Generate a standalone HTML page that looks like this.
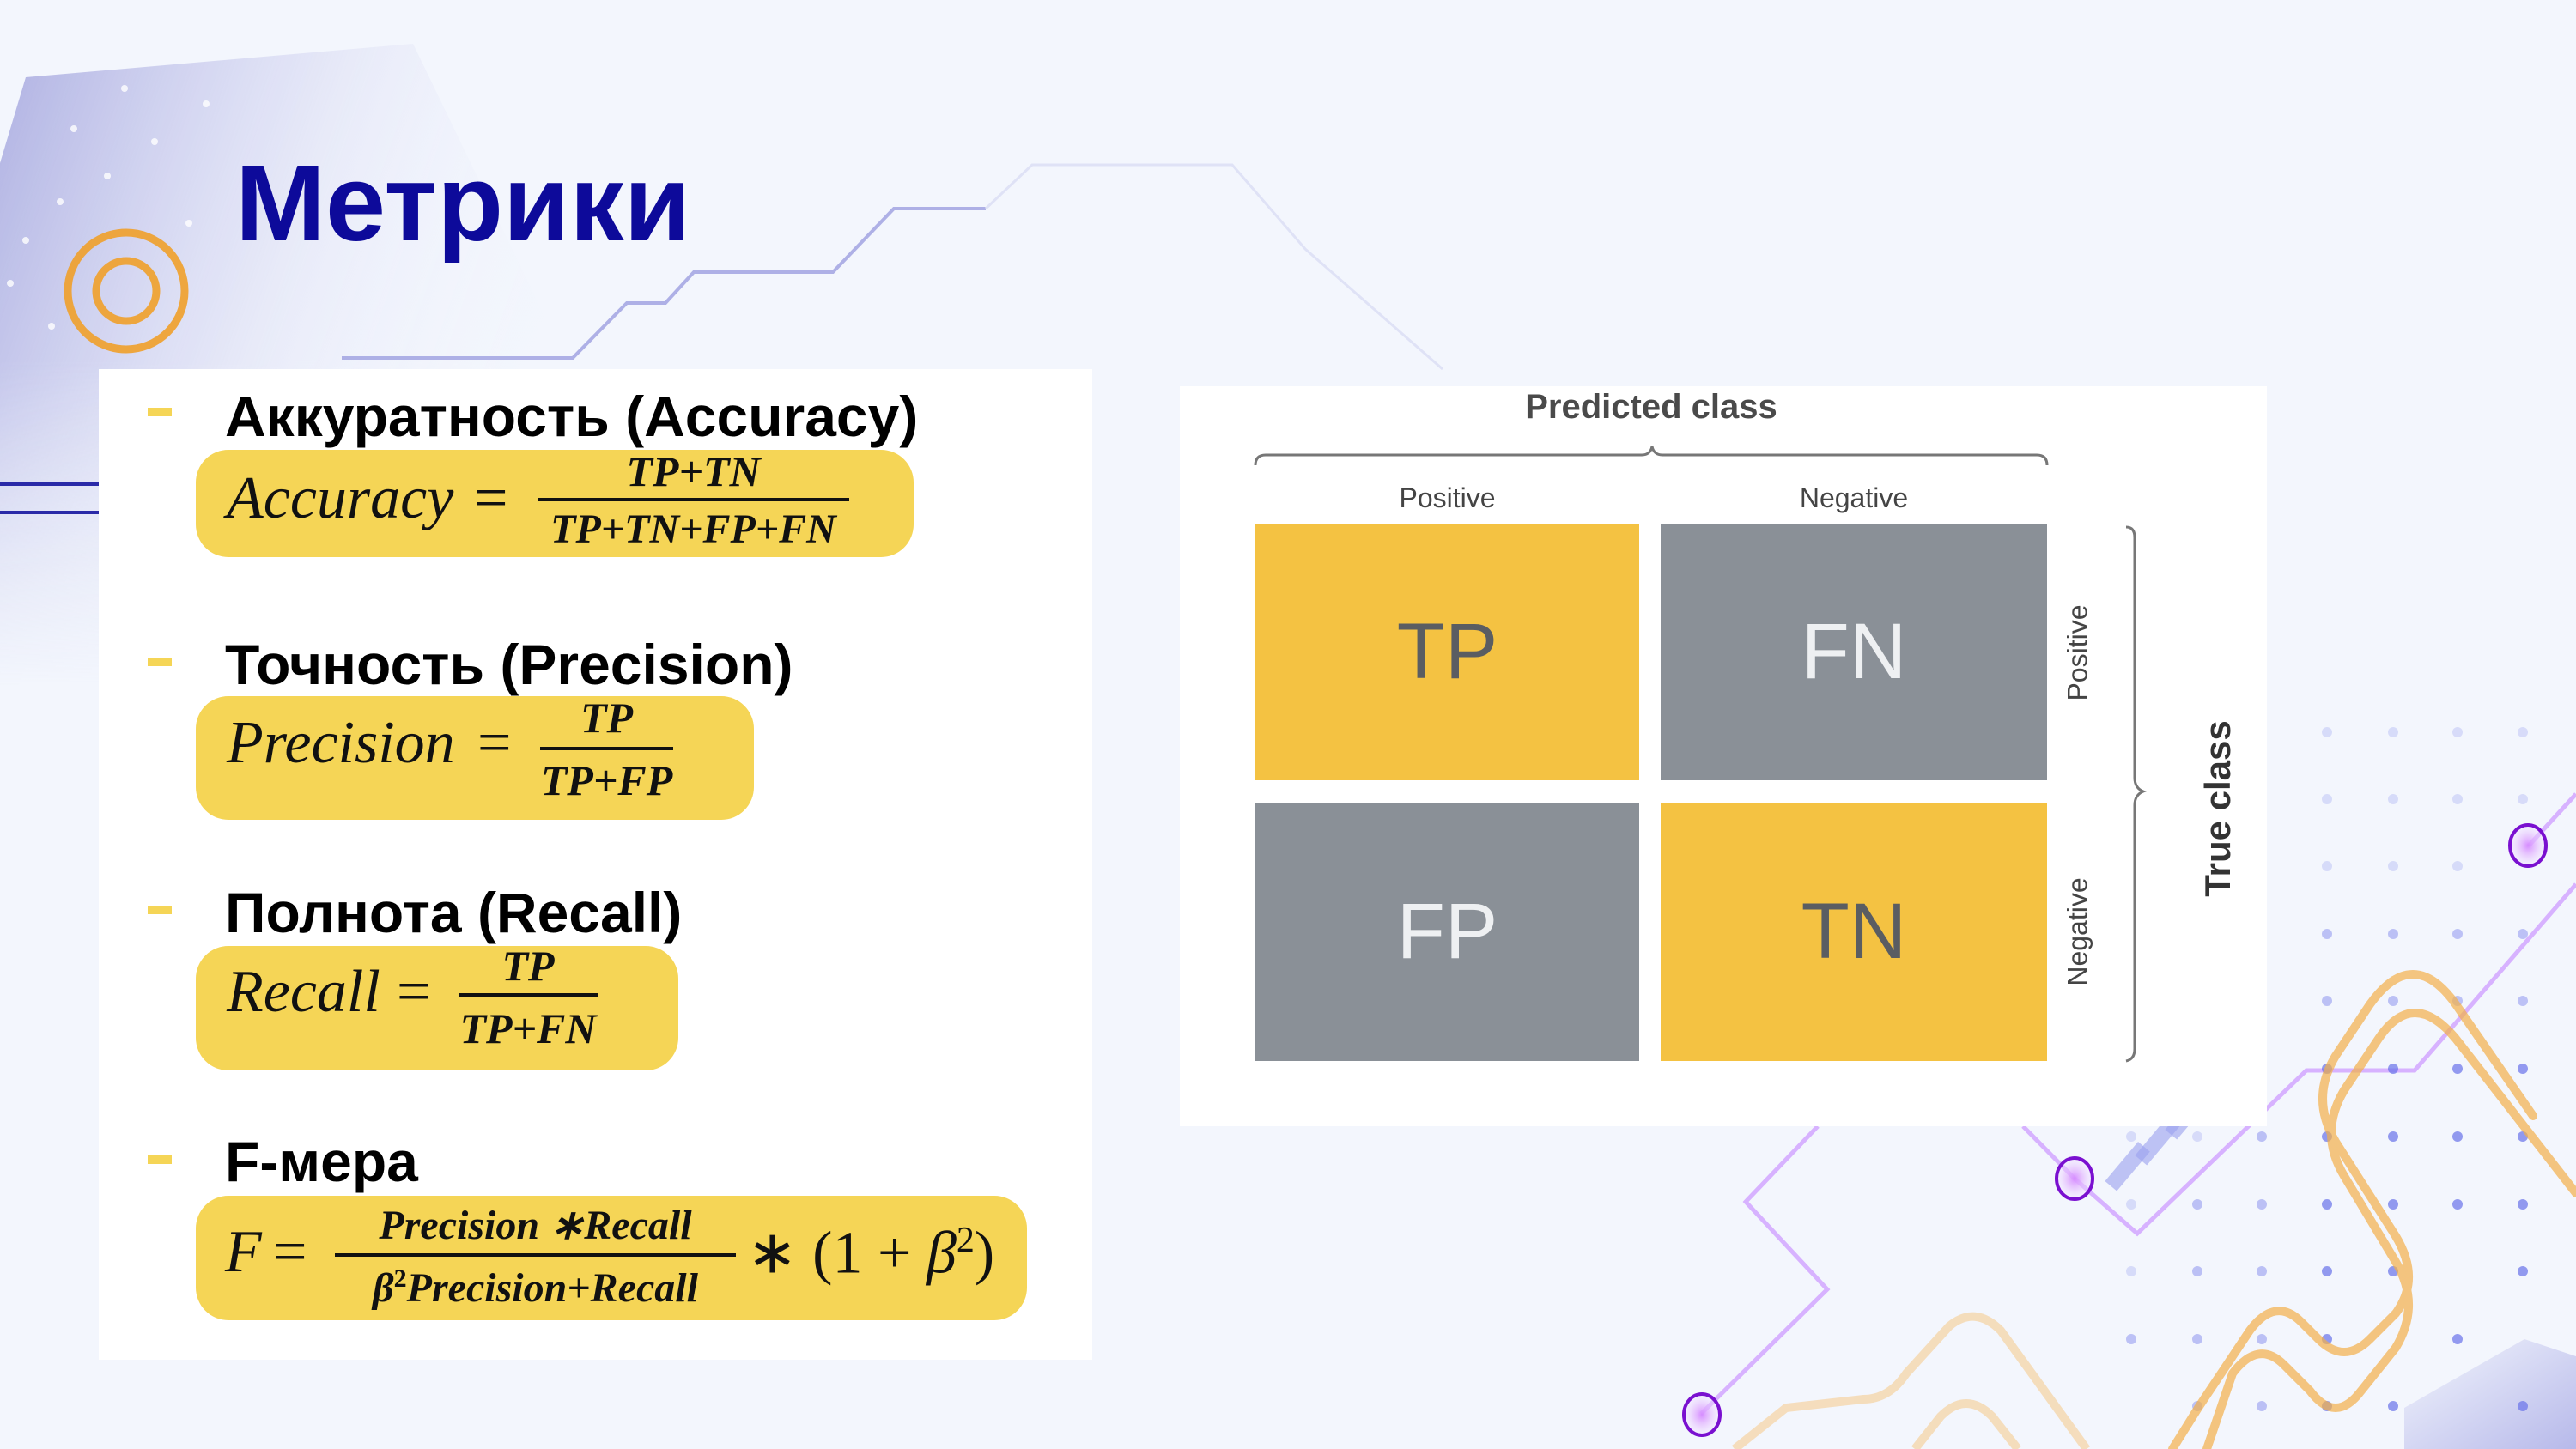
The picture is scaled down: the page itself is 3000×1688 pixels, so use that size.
<!DOCTYPE html>
<html><head><meta charset="utf-8"><style>
*{margin:0;padding:0;box-sizing:border-box}
body{width:3000px;height:1688px;background:#f3f6fd;position:relative;overflow:hidden;font-family:"Liberation Sans",sans-serif}
.a{position:absolute;white-space:nowrap}
.h{font-weight:bold;font-size:66px;color:#000;line-height:66px}
.dash{position:absolute;left:172px;width:28px;height:10px;background:#f5d556}
.box{position:absolute;background:#f5d556;border-radius:38px}
.m{font-family:"Liberation Serif",serif;font-style:italic;color:#111;line-height:1}
.ln{position:absolute;height:4px;background:#111}
.cell{position:absolute;display:flex;align-items:center;justify-content:center;font-size:92px;font-family:"Liberation Sans",sans-serif;font-weight:normal}
</style></head><body>
<svg class="a" style="left:0;top:0" width="3000" height="1688">
<defs>
<linearGradient id="g1" x1="0" y1="0" x2="1" y2="0.4"><stop offset="0" stop-color="#aeb0e2"/><stop offset="0.6" stop-color="#e4e6f7" stop-opacity="0.6"/><stop offset="1" stop-color="#f3f6fd" stop-opacity="0"/></linearGradient>
<linearGradient id="vf" x1="0" y1="0" x2="0" y2="1"><stop offset="0.5" stop-color="#fff"/><stop offset="1" stop-color="#000"/></linearGradient>
<mask id="mk"><rect x="0" y="40" width="700" height="760" fill="url(#vf)"/></mask>
<linearGradient id="g2" x1="0" y1="0" x2="1" y2="1"><stop offset="0" stop-color="#f3f6fd"/><stop offset="1" stop-color="#b7b9ea"/></linearGradient>
<radialGradient id="pc"><stop offset="0" stop-color="#d68cff"/><stop offset="1" stop-color="#f3e6ff" stop-opacity="0.3"/></radialGradient>
</defs>
<polygon points="0,190 30,90 481,51 640,380 430,800 0,800" fill="url(#g1)" mask="url(#mk)"/>
<polygon points="2800,1640 2940,1560 3000,1580 3000,1688 2800,1688" fill="url(#g2)"/>
<g fill="#fff" opacity="0.8"><circle cx="86" cy="150" r="4"/><circle cx="145" cy="103" r="4"/><circle cx="240" cy="121" r="4"/><circle cx="70" cy="235" r="4"/><circle cx="180" cy="165" r="4"/><circle cx="30" cy="280" r="4"/><circle cx="125" cy="205" r="4"/><circle cx="60" cy="380" r="4"/><circle cx="12" cy="330" r="4"/><circle cx="220" cy="260" r="4"/></g>
<polyline points="398,417 667,417 730,353 775,353 808,317 970,317 1041,243 1148,243" fill="none" stroke="#9c9fe0" stroke-width="4" opacity="0.8"/>
<polyline points="1148,243 1202,192 1435,192 1520,290 1680,430" fill="none" stroke="#dfe2f6" stroke-width="3"/>
<line x1="0" y1="564" x2="115" y2="564" stroke="#2a2aa8" stroke-width="4"/>
<line x1="0" y1="597" x2="115" y2="597" stroke="#2a2aa8" stroke-width="4"/>
<circle cx="147" cy="339" r="68" fill="none" stroke="#f0a02a" stroke-width="9" opacity="0.9"/>
<circle cx="147" cy="339" r="35" fill="none" stroke="#f0a02a" stroke-width="9" opacity="0.9"/>
<g fill="none" stroke="#d7b2ff" stroke-width="5">
<polyline points="1981,1647 2128,1502 2033,1400 2117,1312"/>
<polyline points="2356,1312 2416,1373 2489,1437 2686,1247 2812,1247 3000,1030"/>
<line x1="2945" y1="985" x2="3000" y2="925"/>
</g>
<g fill="#9aa0ee">
<rect x="2490" y="1330" width="18" height="60" transform="rotate(40 2490 1330)" opacity="0.6"/>
<rect x="2525" y="1300" width="18" height="60" transform="rotate(40 2525 1300)" opacity="0.6"/>
<rect x="2560" y="1270" width="18" height="60" transform="rotate(40 2560 1270)" opacity="0.6"/>
<rect x="2610" y="1210" width="18" height="60" transform="rotate(40 2610 1210)" opacity="0.6"/>
</g>
<g fill="#6872ea">
<g opacity="0.2"><circle cx="2710" cy="853" r="6"/><circle cx="2787" cy="853" r="6"/><circle cx="2862" cy="853" r="6"/><circle cx="2938" cy="853" r="6"/>
<circle cx="2710" cy="931" r="6"/><circle cx="2787" cy="931" r="6"/><circle cx="2862" cy="931" r="6"/><circle cx="2938" cy="931" r="6"/>
<circle cx="2710" cy="1009" r="6"/><circle cx="2787" cy="1009" r="6"/><circle cx="2862" cy="1009" r="6"/>
<circle cx="2482" cy="1324" r="6"/><circle cx="2482" cy="1403" r="6"/><circle cx="2482" cy="1481" r="6"/><circle cx="2559" cy="1324" r="6"/></g>
<g opacity="0.4"><circle cx="2710" cy="1088" r="6"/><circle cx="2787" cy="1088" r="6"/><circle cx="2862" cy="1088" r="6"/><circle cx="2938" cy="1088" r="6"/>
<circle cx="2710" cy="1166" r="6"/><circle cx="2787" cy="1166" r="6"/><circle cx="2862" cy="1166" r="6"/><circle cx="2938" cy="1166" r="6"/>
<circle cx="2634" cy="1324" r="6"/><circle cx="2559" cy="1403" r="6"/><circle cx="2634" cy="1403" r="6"/><circle cx="2634" cy="1481" r="6"/><circle cx="2559" cy="1481" r="6"/><circle cx="2482" cy="1560" r="6"/><circle cx="2559" cy="1560" r="6"/><circle cx="2634" cy="1560" r="6"/><circle cx="2559" cy="1638" r="6"/><circle cx="2634" cy="1638" r="6"/></g>
<g opacity="0.7"><circle cx="2710" cy="1245" r="6"/><circle cx="2787" cy="1245" r="6"/><circle cx="2862" cy="1245" r="6"/><circle cx="2938" cy="1245" r="6"/>
<circle cx="2710" cy="1324" r="6"/><circle cx="2787" cy="1324" r="6"/><circle cx="2862" cy="1324" r="6"/><circle cx="2938" cy="1324" r="6"/>
<circle cx="2710" cy="1403" r="6"/><circle cx="2787" cy="1403" r="6"/><circle cx="2862" cy="1403" r="6"/><circle cx="2938" cy="1403" r="6"/>
<circle cx="2710" cy="1481" r="6"/><circle cx="2787" cy="1481" r="6"/><circle cx="2938" cy="1481" r="6"/>
<circle cx="2710" cy="1560" r="6"/><circle cx="2862" cy="1560" r="6"/><circle cx="2710" cy="1638" r="6"/><circle cx="2787" cy="1638" r="6"/><circle cx="2938" cy="1638" r="6"/></g>
</g>
<g fill="none" stroke="#f3b04a" stroke-width="10" opacity="0.7" stroke-linecap="round">
<path d="M2950,1300 L2860,1170 Q2810,1100 2760,1170 L2720,1230 Q2690,1280 2720,1330 L2790,1440 Q2820,1490 2790,1530 L2760,1560 Q2730,1590 2700,1560 L2680,1540 Q2650,1510 2620,1550 L2560,1640 L2530,1688"/>
<path d="M3000,1390 L2860,1210 Q2810,1150 2770,1210 L2730,1270 Q2700,1320 2730,1370 L2790,1470 Q2820,1520 2790,1570 L2750,1620 Q2720,1660 2690,1620 L2660,1590 Q2630,1560 2600,1600 L2570,1688"/>
</g>
<g fill="none" stroke="#f5d7ad" stroke-width="10" opacity="0.8">
<path d="M2020,1688 L2080,1640 L2170,1630 Q2200,1630 2220,1600 L2270,1545 Q2300,1520 2330,1550 L2430,1688"/>
<path d="M2230,1688 L2260,1650 Q2290,1620 2320,1650 L2350,1688"/>
</g>
<g stroke="#7a10d0" stroke-width="4" fill="url(#pc)">
<ellipse cx="2944" cy="985" rx="21" ry="24"/>
<ellipse cx="2416" cy="1373" rx="21" ry="24"/>
<ellipse cx="1982" cy="1648" rx="21" ry="24"/>
</g>
</svg>

<div class="a" style="left:274px;top:174px;font-size:126px;font-weight:bold;color:#0d0a9a;line-height:126px">Метрики</div>

<div class="a" style="left:115px;top:430px;width:1157px;height:1154px;background:#fff"></div>

<div class="dash" style="top:475px"></div>
<div class="dash" style="top:766px"></div>
<div class="dash" style="top:1055px"></div>
<div class="dash" style="top:1346px"></div>
<div class="a h" style="left:262px;top:452px">Аккуратность (Accuracy)</div>
<div class="a h" style="left:262px;top:741px">Точность (Precision)</div>
<div class="a h" style="left:262px;top:1030px">Полнота (Recall)</div>
<div class="a h" style="left:262px;top:1320px">F-мера</div>

<div class="box" style="left:228px;top:524px;width:836px;height:125px"></div>
<div class="box" style="left:228px;top:811px;width:650px;height:144px"></div>
<div class="box" style="left:228px;top:1102px;width:562px;height:145px"></div>
<div class="box" style="left:228px;top:1393px;width:968px;height:145px"></div>

<!-- Accuracy -->
<div class="a m" style="left:264px;top:546px;font-size:70px">Accuracy</div>
<div class="a m" style="left:552px;top:546px;font-size:70px;font-style:normal">=</div>
<div class="ln" style="left:626px;top:580px;width:363px"></div>
<div class="a m" style="left:626px;width:363px;text-align:center;top:524px;font-size:50px;font-weight:bold">TP+TN</div>
<div class="a m" style="left:626px;width:363px;text-align:center;top:593px;font-size:48px;font-weight:bold">TP+TN+FP+FN</div>
<!-- Precision -->
<div class="a m" style="left:264px;top:831px;font-size:70px">Precision</div>
<div class="a m" style="left:556px;top:831px;font-size:70px;font-style:normal">=</div>
<div class="ln" style="left:629px;top:870px;width:155px"></div>
<div class="a m" style="left:629px;width:155px;text-align:center;top:811px;font-size:50px;font-weight:bold">TP</div>
<div class="a m" style="left:629px;width:155px;text-align:center;top:884px;font-size:50px;font-weight:bold">TP+FP</div>
<!-- Recall -->
<div class="a m" style="left:264px;top:1121px;font-size:70px">Recall</div>
<div class="a m" style="left:462px;top:1121px;font-size:70px;font-style:normal">=</div>
<div class="ln" style="left:534px;top:1157px;width:162px"></div>
<div class="a m" style="left:534px;width:162px;text-align:center;top:1100px;font-size:50px;font-weight:bold">TP</div>
<div class="a m" style="left:534px;width:162px;text-align:center;top:1173px;font-size:50px;font-weight:bold">TP+FN</div>
<!-- F -->
<div class="a m" style="left:262px;top:1424px;font-size:70px">F</div>
<div class="a m" style="left:318px;top:1424px;font-size:70px;font-style:normal">=</div>
<div class="ln" style="left:390px;top:1460px;width:467px"></div>
<div class="a m" style="left:390px;width:467px;text-align:center;top:1404px;font-size:48px;font-weight:bold">Precision ∗Recall</div>
<div class="a m" style="left:390px;width:467px;text-align:center;top:1475px;font-size:48px;font-weight:bold">β<sup style="font-size:30px;font-style:normal">2</sup>Precision+Recall</div>
<div class="a m" style="left:870px;top:1424px;font-size:70px;font-style:normal">∗ (1 + <i>β</i><sup style="font-size:42px">2</sup>)</div>

<!-- matrix -->
<div class="a" style="left:1374px;top:450px;width:1266px;height:862px;background:#fff"></div>
<div class="a" style="left:1623px;width:600px;text-align:center;top:452px;font-size:40px;font-weight:bold;color:#4a4a4a">Predicted class</div>
<svg class="a" style="left:1374px;top:450px" width="1266" height="862" fill="none" stroke="#777" stroke-width="3">
<path d="M88,92 Q88,80 100,80 L538,80 Q548,80 550,70 Q552,80 562,80 L998,80 Q1010,80 1010,92"/>
<path d="M1102,164 Q1112,164 1112,176 L1112,456 Q1112,468 1122,472 Q1112,476 1112,488 L1112,772 Q1112,784 1102,786"/>
</svg>
<div class="a" style="left:1462px;width:447px;text-align:center;top:562px;font-size:32px;color:#444">Positive</div>
<div class="a" style="left:1934px;width:450px;text-align:center;top:562px;font-size:32px;color:#444">Negative</div>
<div class="cell" style="left:1462px;top:610px;width:447px;height:299px;background:#f4c242;color:#5a5d62">TP</div>
<div class="cell" style="left:1934px;top:610px;width:450px;height:299px;background:#8a9097;color:#eef0f2">FN</div>
<div class="cell" style="left:1462px;top:935px;width:447px;height:301px;background:#8a9097;color:#eef0f2">FP</div>
<div class="cell" style="left:1934px;top:935px;width:450px;height:301px;background:#f4c242;color:#5a5d62">TN</div>
<div class="a" style="left:2320px;top:742px;width:200px;text-align:center;font-size:32px;color:#444;transform:rotate(-90deg)">Positive</div>
<div class="a" style="left:2320px;top:1067px;width:200px;text-align:center;font-size:32px;color:#444;transform:rotate(-90deg)">Negative</div>
<div class="a" style="left:2463px;top:918px;width:240px;text-align:center;font-size:42px;font-weight:bold;color:#333;transform:rotate(-90deg)">True class</div>
</body></html>
